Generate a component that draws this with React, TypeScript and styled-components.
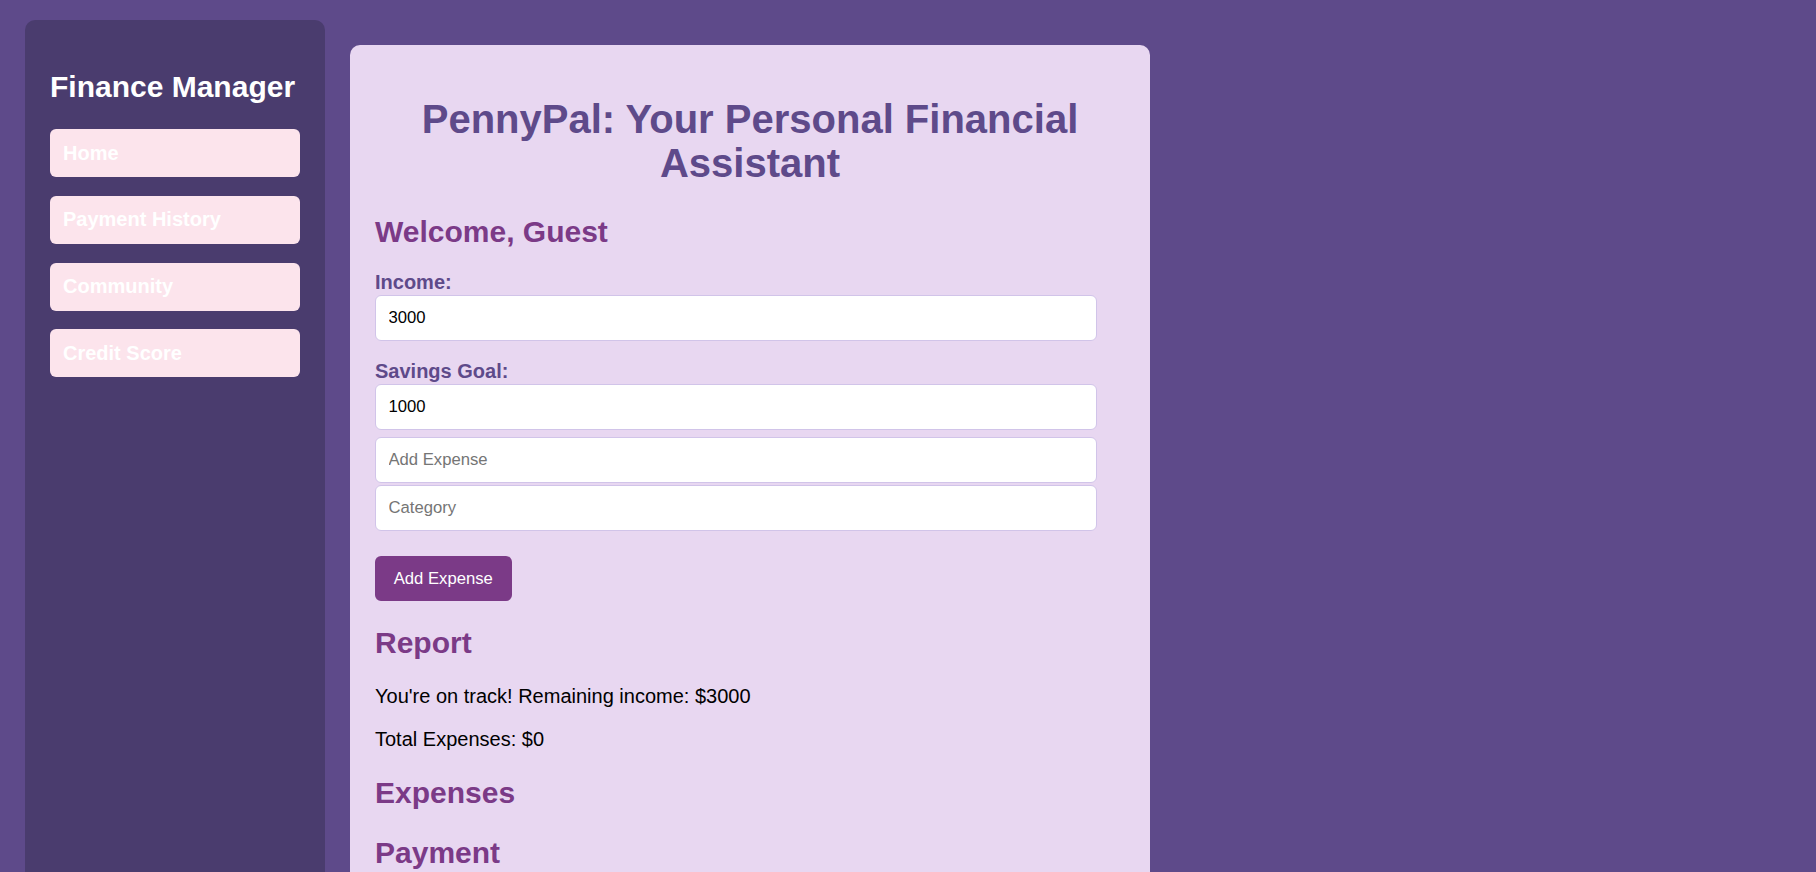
import React, { useState } from "react";
import styled, { createGlobalStyle } from "styled-components";

const GlobalStyle = createGlobalStyle`
  html,
  body {
    margin: 0;
    padding: 0;
    background-color: #5e4a8a;
    font-family: "Liberation Sans", Arial, sans-serif;
  }
`;

const Layout = styled.div`
  display: flex;
  align-items: flex-start;
  gap: 25px;
  padding: 20px 25px 0;
`;

const Sidebar = styled.aside`
  box-sizing: border-box;
  flex: 0 0 300px;
  width: 300px;
  min-height: 100vh;
  padding: 25px;
  background-color: #4a3c6e;
  border-radius: 10px;
`;

const SidebarTitle = styled.h2`
  margin: 25px 0 24.5px;
  color: #fff;
  font-size: 30px;
  font-weight: 700;
  line-height: 34.5px;
`;

const NavList = styled.nav`
  display: flex;
  flex-direction: column;
  gap: 18.75px;
`;

const NavItem = styled.a`
  display: block;
  padding: 12.5px 12.5px 12.5px 13px;
  background-color: #fce4ec;
  border-radius: 6px;
  color: #fff;
  font-size: 20px;
  font-weight: 700;
  line-height: 23px;
  text-decoration: none;
  cursor: pointer;
`;

const Card = styled.main`
  box-sizing: border-box;
  width: 800px;
  margin-top: 25px;
  padding: 25px 25px 40px;
  background-color: #e8d7f1;
  border-radius: 10px;
`;

const Title = styled.h1`
  margin: 26.8px 0 30px;
  color: #5e4a8a;
  font-size: 40px;
  font-weight: 700;
  line-height: 44px;
  text-align: center;
`;

const SectionTitle = styled.h2<{ $first?: boolean }>`
  margin: ${(p) => (p.$first ? "0" : "24.9px")} 0 24.9px;
  color: #7b3a87;
  font-size: 30px;
  font-weight: 700;
  line-height: 34.5px;
`;

const Label = styled.label<{ $gap: number }>`
  display: block;
  margin: ${(p) => p.$gap}px 0 1px;
  color: #5e4a8a;
  font-size: 20px;
  font-weight: 700;
  line-height: 23px;
`;

const Input = styled.input<{ $gap?: number }>`
  display: block;
  box-sizing: border-box;
  width: 722px;
  height: 46px;
  margin: ${(p) => p.$gap ?? 0}px 0 0;
  padding: 0 12.5px;
  background: #fff;
  border: 1.25px solid #d1c4e9;
  border-radius: 6px;
  color: #000;
  font-family: "Liberation Sans", Arial, sans-serif;
  font-size: 16.67px;
  outline: none;

  &::placeholder {
    color: #757575;
  }
`;

const Button = styled.button`
  display: block;
  box-sizing: border-box;
  height: 45px;
  margin-top: 25.3px;
  padding: 0 18.75px;
  background-color: #7b3a87;
  border: none;
  border-radius: 6px;
  color: #fff;
  font-family: "Liberation Sans", Arial, sans-serif;
  font-size: 16.67px;
  cursor: pointer;
`;

const Text = styled.p`
  margin: 20px 0;
  color: #000;
  font-size: 20px;
  line-height: 23px;
`;

const navLinks = ["Home", "Payment History", "Community", "Credit Score"];

type Expense = { amount: number; category: string };

function App(): JSX.Element {
  const [income, setIncome] = useState("3000");
  const [goal, setGoal] = useState("1000");
  const [amount, setAmount] = useState("");
  const [category, setCategory] = useState("");
  const [expenses, setExpenses] = useState<Expense[]>([]);

  const total = expenses.reduce((sum, e) => sum + e.amount, 0);
  const remaining = Number(income) - total;

  const addExpense = (): void => {
    const value = Number(amount);
    if (!value) return;
    setExpenses([...expenses, { amount: value, category }]);
    setAmount("");
    setCategory("");
  };

  return (
    <>
      <GlobalStyle />
      <Layout>
        <Sidebar>
          <SidebarTitle>Finance Manager</SidebarTitle>
          <NavList>
            {navLinks.map((link) => (
              <NavItem key={link}>{link}</NavItem>
            ))}
          </NavList>
        </Sidebar>
        <Card>
          <Title>PennyPal: Your Personal Financial Assistant</Title>
          <SectionTitle $first>Welcome, Guest</SectionTitle>
          <Label $gap={-3}>Income:</Label>
          <Input value={income} onChange={(e) => setIncome(e.target.value)} />
          <Label $gap={19.2}>Savings Goal:</Label>
          <Input value={goal} onChange={(e) => setGoal(e.target.value)} />
          <Input
            $gap={7}
            placeholder="Add Expense"
            value={amount}
            onChange={(e) => setAmount(e.target.value)}
          />
          <Input
            $gap={1.4}
            placeholder="Category"
            value={category}
            onChange={(e) => setCategory(e.target.value)}
          />
          <Button onClick={addExpense}>Add Expense</Button>
          <SectionTitle>Report</SectionTitle>
          <Text>
            {remaining >= Number(goal)
              ? `You're on track! Remaining income: $${remaining}`
              : `Careful! Remaining income: $${remaining}`}
          </Text>
          <Text>Total Expenses: ${total}</Text>
          <SectionTitle>Expenses</SectionTitle>
          {expenses.map((e, i) => (
            <Text key={i}>
              {e.category || "Other"}: ${e.amount}
            </Text>
          ))}
          <SectionTitle>Payment</SectionTitle>
        </Card>
      </Layout>
    </>
  );
}

export default App;
